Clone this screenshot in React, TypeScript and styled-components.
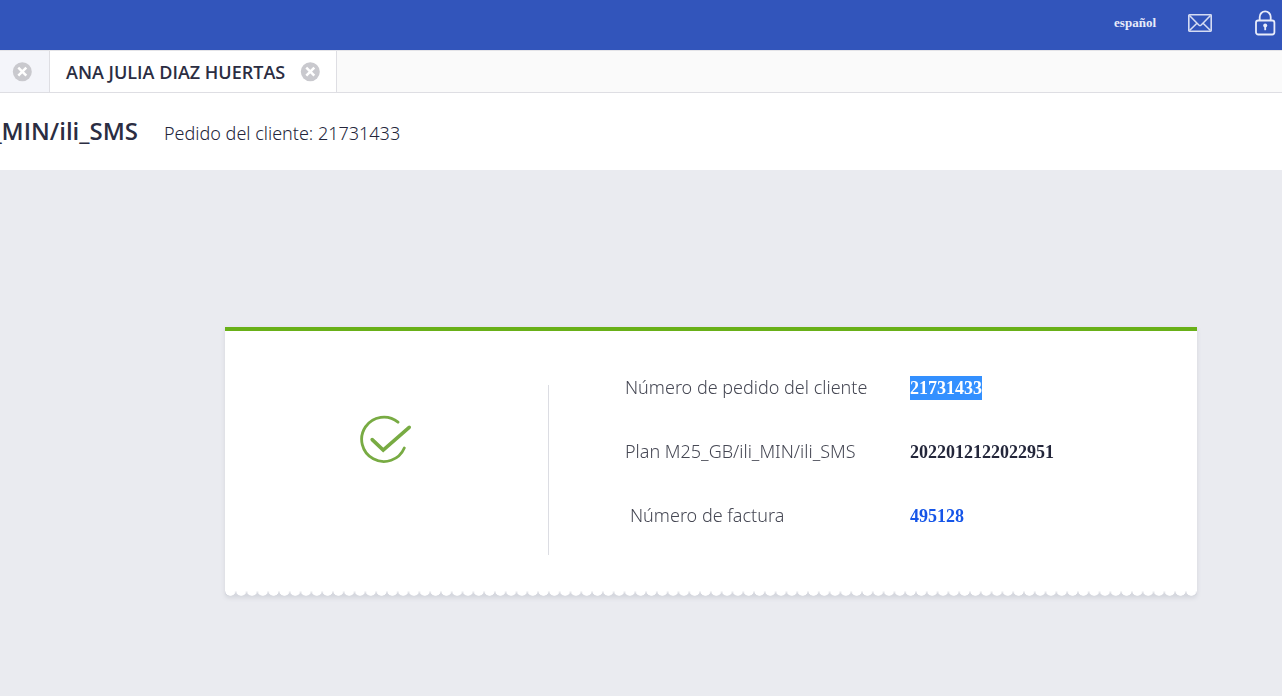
import React from "react";
import styled, { createGlobalStyle } from "styled-components";

const GlobalStyle = createGlobalStyle`
  *, *::before, *::after { box-sizing: border-box; }
  body {
    margin: 0;
    background: #eaebf0;
    color: #2b2d42;
    font-family: "Open Sans", "Noto Sans", sans-serif;
  }
`;

const Page = styled.div`
  min-height: 100vh;
  display: flex;
  flex-direction: column;
  overflow-x: hidden;
`;

const TopBar = styled.header`
  height: 50px;
  display: flex;
  align-items: center;
  justify-content: flex-end;
  gap: 32px;
  padding: 0 6px 5px 16px;
  background: #3255bb;
`;

const PlainButton = styled.button`
  display: flex;
  align-items: center;
  padding: 0;
  border: 0;
  background: none;
  color: inherit;
  cursor: pointer;
`;

const LanguageButton = styled(PlainButton)`
  color: #e8ecfa;
  font: 700 13px/16px "Liberation Serif", serif;
`;

const MailButton = styled(PlainButton)`
  margin-right: 11px;
`;

const TabBar = styled.nav`
  height: 43px;
  display: flex;
  background: #fafafa;
  border-top: 1px solid #e4e4e8;
  border-bottom: 1px solid #dedee3;
`;

const Tab = styled.div<{ $active?: boolean }>`
  display: flex;
  align-items: center;
  gap: 15px;
  padding: 0 16px;
  border-right: 1px solid #dedee3;
  background: ${(p) => (p.$active ? "#ffffff" : "#f4f5fa")};
`;

const BackTab = styled(Tab)`
  width: 50px;
  padding: 0 12px;
`;

const TabLabel = styled(PlainButton)`
  color: #2b2d42;
  font: 600 18px/24px "Open Sans", sans-serif;
  white-space: nowrap;
`;

const TitleBar = styled.div`
  height: 77px;
  display: flex;
  align-items: center;
  gap: 26px;
  padding-bottom: 2px;
  background: #ffffff;
`;

const Title = styled.h1`
  width: 138px;
  display: flex;
  justify-content: flex-end;
  overflow: hidden;
  margin: 0;
  font: 600 24px/32px "Open Sans", sans-serif;
  white-space: nowrap;
`;

const Subtitle = styled.p`
  margin: 0;
  padding-top: 4px;
  color: #23253a;
  font: 300 18px/24px "Noto Sans", sans-serif;
  white-space: nowrap;
`;

const Content = styled.main`
  flex: 1;
  padding: 157px 85px 98px 225px;
`;

const Receipt = styled.section`
  filter: drop-shadow(0 2px 2px rgba(60, 64, 80, 0.12));
`;

const ReceiptBody = styled.div`
  display: flex;
  height: 264px;
  border-top: 4px solid #69b018;
  background: #ffffff;
`;

const ScallopEdge = styled.div`
  height: 5px;
  background-color: #d6d8df;
  background-image: radial-gradient(ellipse 50% 100% at 50% 0, #ffffff 88%, transparent 100%);
  background-size: calc(100% / 90) 100%;
  border-radius: 0 0 4px 4px;
`;

const Status = styled.div`
  width: 324px;
  height: 170px;
  margin-top: 54px;
  padding: 30px 0 0 134px;
  border-right: 1px solid #dcdde3;
`;

const Details = styled.dl`
  margin: 0;
  padding: 24px 0 0 76px;
`;

const DetailRow = styled.div<{ $nested?: boolean }>`
  display: grid;
  grid-template-columns: 285px auto;
  align-items: center;
  height: 64px;

  dt {
    padding-left: ${(p) => (p.$nested ? "5px" : "0")};
    color: #464854;
    font: 300 18px/24px "Noto Sans", sans-serif;
  }

  dd {
    margin: 0;
    padding-top: 2px;
    color: #23263a;
    font: 700 18px/24px "Liberation Serif", serif;
  }
`;

const Selected = styled.mark`
  display: block;
  width: fit-content;
  background: #3390ff;
  color: #ffffff;
`;

const InvoiceLink = styled.a`
  color: #1555e8;
  text-decoration: none;
`;

const CloseButton = ({ label }: { label: string }) => (
  <PlainButton type="button" aria-label={label}>
    <svg width="20" height="20" viewBox="0 0 20 20" aria-hidden="true">
      <circle cx="10.3" cy="9.7" r="9.5" fill="#c9c9ce" />
      <path d="M6.3 5.7l8 8M14.3 5.7l-8 8" stroke="#fff" strokeWidth="2.5" />
    </svg>
  </PlainButton>
);

const MailIcon = () => (
  <svg width="24" height="18" viewBox="0 0 24 18" fill="none" stroke="#d5dcf3" strokeWidth="1.6" aria-hidden="true">
    <rect x="0.8" y="0.8" width="22.4" height="16.4" rx="0.6" />
    <path d="M1.5 1.5L10.8 11q1.2 1.1 2.4 0L22.5 1.5M1.5 16.5l7.2-7M22.5 16.5l-7.2-7" />
  </svg>
);

const LockIcon = () => (
  <svg width="21" height="26" viewBox="0 0 21 26" fill="none" stroke="#e8ecfa" strokeWidth="1.8" aria-hidden="true">
    <rect x="1" y="10.5" width="18.4" height="14" rx="2.2" />
    <path d="M4.7 10.2V6.9a5.5 5.5 0 0 1 11 0v3.3" />
    <circle cx="10.2" cy="15.6" r="2" fill="#e8ecfa" stroke="none" />
    <path d="M10.2 15.6v4.6" />
  </svg>
);

const SuccessIcon = () => (
  <svg width="54" height="50" viewBox="0 0 54 50" fill="none" stroke="#78ab43" strokeLinecap="round" role="img" aria-label="Completado">
    <path d="M39 7.2A22.2 22.2 0 1 0 45.3 33" strokeWidth="2.8" />
    <path d="M13.2 24.6L24.2 35L50.2 12.3" strokeWidth="3.6" strokeLinejoin="miter" />
  </svg>
);

export default function App() {
  return (
    <Page>
      <GlobalStyle />
      <TopBar>
        <LanguageButton type="button">español</LanguageButton>
        <MailButton type="button" aria-label="Mensajes">
          <MailIcon />
        </MailButton>
        <PlainButton type="button" aria-label="Bloquear">
          <LockIcon />
        </PlainButton>
      </TopBar>
      <TabBar>
        <BackTab>
          <CloseButton label="Cerrar pestaña anterior" />
        </BackTab>
        <Tab $active>
          <TabLabel type="button">ANA JULIA DIAZ HUERTAS</TabLabel>
          <CloseButton label="Cerrar pestaña" />
        </Tab>
      </TabBar>
      <TitleBar>
        <Title>_MIN/ili_SMS</Title>
        <Subtitle>Pedido del cliente: 21731433</Subtitle>
      </TitleBar>
      <Content>
        <Receipt>
          <ReceiptBody>
            <Status>
              <SuccessIcon />
            </Status>
            <Details>
              <DetailRow>
                <dt>Número de pedido del cliente</dt>
                <dd>
                  <Selected>21731433</Selected>
                </dd>
              </DetailRow>
              <DetailRow>
                <dt>Plan M25_GB/ili_MIN/ili_SMS</dt>
                <dd>2022012122022951</dd>
              </DetailRow>
              <DetailRow $nested>
                <dt>Número de factura</dt>
                <dd>
                  <InvoiceLink href="#factura">495128</InvoiceLink>
                </dd>
              </DetailRow>
            </Details>
          </ReceiptBody>
          <ScallopEdge />
        </Receipt>
      </Content>
    </Page>
  );
}
